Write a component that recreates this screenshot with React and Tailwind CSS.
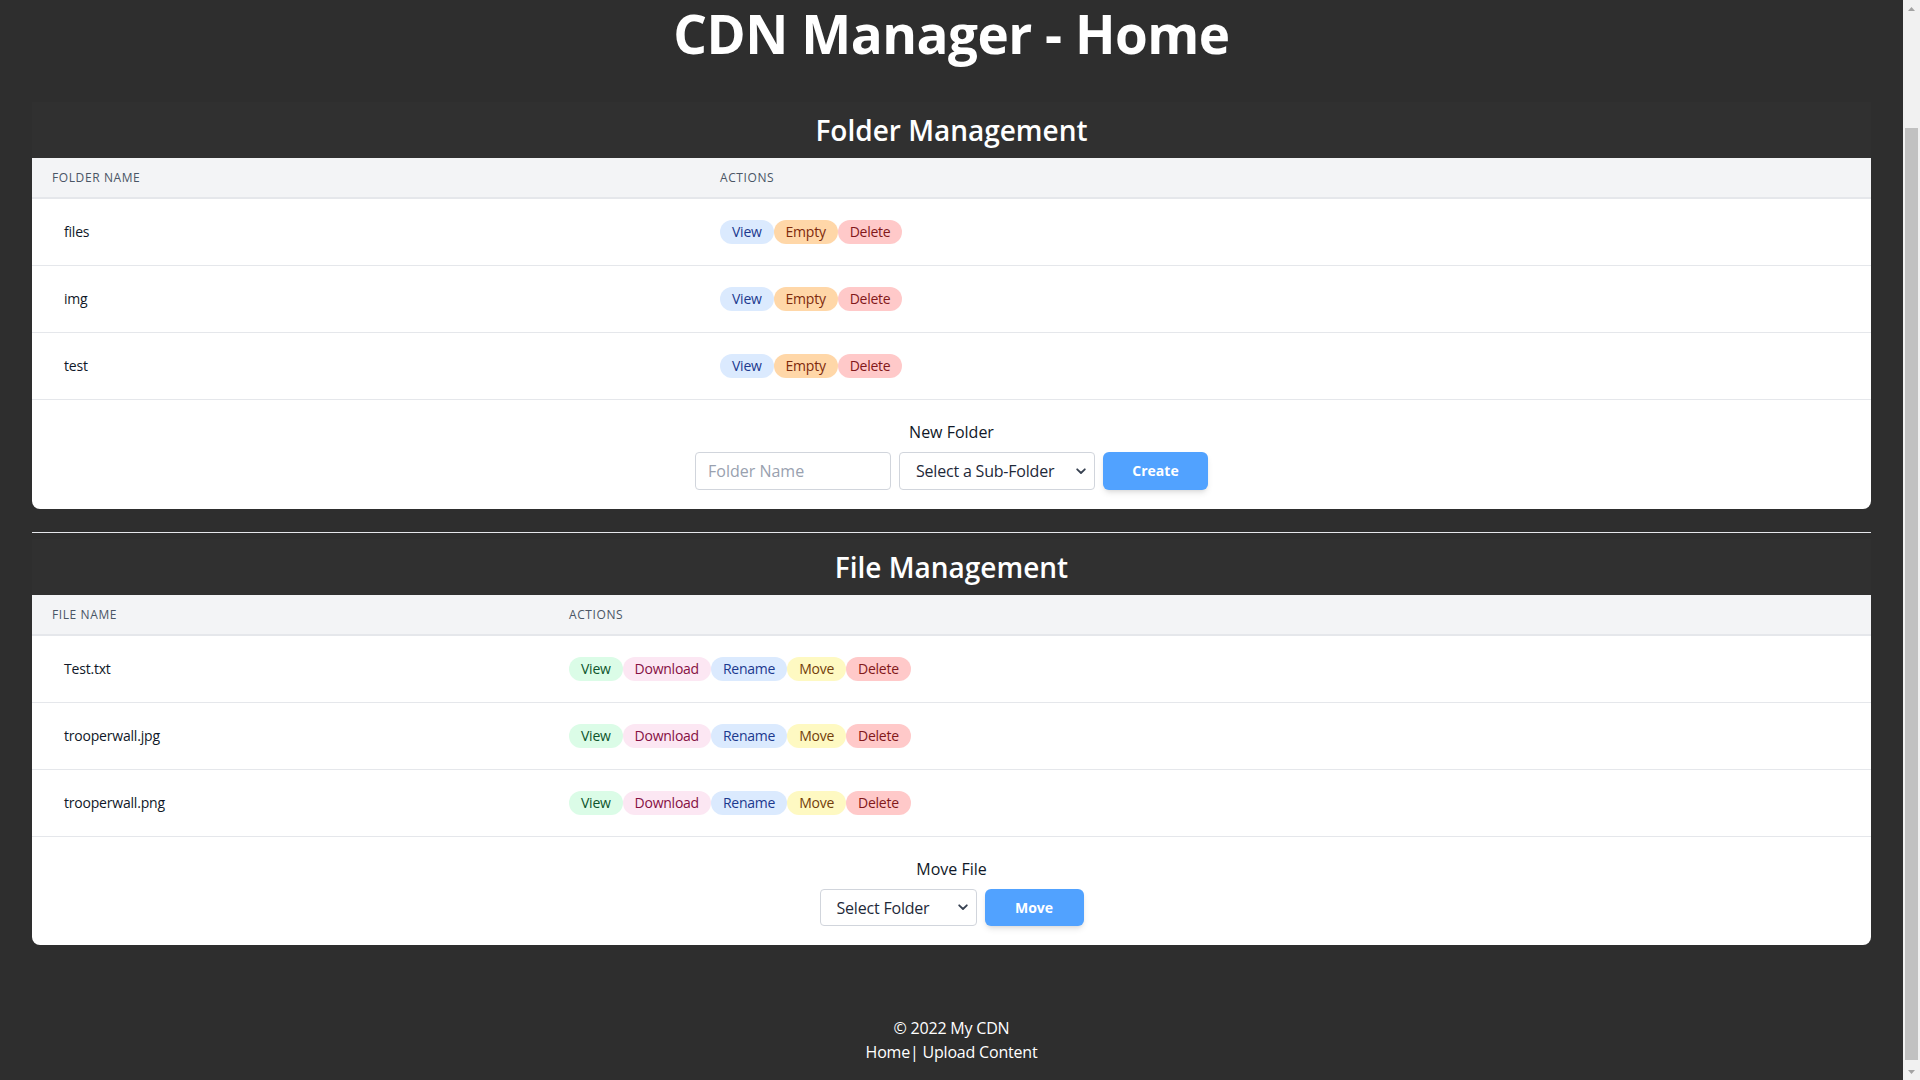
import React from "react";

const font = { fontFamily: '"Open Sans", "Noto Sans", sans-serif' };

function Pill({ cls, children }) {
  return (
    <button className={`h-6 px-3 rounded-full text-sm leading-6 tracking-[-0.25px] ${cls}`}>{children}</button>
  );
}

function Chevron() {
  return (
    <svg width="10" height="7" viewBox="0 0 10 7" className="shrink-0">
      <path d="M1.2 1.3 L5 5 L8.8 1.3" fill="none" stroke="#374151" strokeWidth="1.8" strokeLinecap="round" strokeLinejoin="round" />
    </svg>
  );
}

function FolderRow({ name }) {
  return (
    <div className="flex h-[67px] items-center border-b border-[#e5e7eb]">
      <div className="w-[668px] pl-8 text-sm text-gray-900 tracking-[-0.2px]">{name}</div>
      <div className="flex pl-5">
        <Pill cls="bg-blue-100 text-blue-900">View</Pill>
        <Pill cls="bg-orange-200 text-orange-900">Empty</Pill>
        <Pill cls="bg-red-200 text-red-900">Delete</Pill>
      </div>
    </div>
  );
}

function FileRow({ name }) {
  return (
    <div className="flex h-[67px] items-center border-b border-[#e5e7eb]">
      <div className="w-[517px] pl-8 text-sm text-gray-900 tracking-[-0.2px]">{name}</div>
      <div className="flex pl-5">
        <Pill cls="bg-green-100 text-green-900">View</Pill>
        <Pill cls="bg-pink-100 text-pink-900">Download</Pill>
        <Pill cls="bg-blue-100 text-blue-900">Rename</Pill>
        <Pill cls="bg-yellow-100 text-yellow-900">Move</Pill>
        <Pill cls="bg-red-200 text-red-900">Delete</Pill>
      </div>
    </div>
  );
}

export default function App() {
  return (
    <div className="h-screen w-full flex overflow-hidden bg-[#2e2e2e]" style={font}>
      <div className="flex-1 flex flex-col">
        <h1 className="text-center text-white font-bold text-[53px] leading-[68px] tracking-[-0.5px]">
          CDN Manager - Home
        </h1>

        <div className="mx-8 mt-[34px]">
          <h2 className="h-[56px] leading-[56px] text-center text-white font-semibold text-[28px] bg-[#303030]">
            Folder Management
          </h2>
          <div className="bg-white rounded-b-lg">
            <div className="flex h-[41px] items-center bg-gray-100 border-b-2 border-[#e5e7eb] text-xs font-medium text-gray-600 tracking-wider uppercase">
              <div className="w-[668px] pl-5 pt-px">Folder Name</div>
              <div className="pl-5 pt-px">Actions</div>
            </div>
            <FolderRow name="files" />
            <FolderRow name="img" />
            <FolderRow name="test" />
            <div className="flex flex-col items-center pt-[20px] pb-[19px]">
              <div className="text-base leading-6 text-gray-900">New Folder</div>
              <div className="mt-2 flex gap-2">
                <input
                  placeholder="Folder Name"
                  className="w-[196px] h-[38px] border border-gray-300 rounded px-3 text-base placeholder:text-gray-400 outline-none"
                />
                <div className="w-[196px] h-[38px] border border-gray-300 rounded pl-4 pr-2 flex items-center justify-between text-base text-gray-800 tracking-[-0.2px]">
                  <span>Select a Sub-Folder</span>
                  <Chevron />
                </div>
                <button className="w-[105px] h-[38px] rounded-md bg-blue-400 text-white text-sm font-bold shadow-md">
                  Create
                </button>
              </div>
            </div>
          </div>

          <div className="mt-[23px] h-px bg-gray-200" />

          <h2 className="mt-[6px] h-[56px] leading-[56px] text-center text-white font-semibold text-[28px] bg-[#303030]">
            File Management
          </h2>
          <div className="bg-white rounded-b-lg">
            <div className="flex h-[41px] items-center bg-gray-100 border-b-2 border-[#e5e7eb] text-xs font-medium text-gray-600 tracking-wider uppercase">
              <div className="w-[517px] pl-5 pt-px">File Name</div>
              <div className="pl-5 pt-px">Actions</div>
            </div>
            <FileRow name="Test.txt" />
            <FileRow name="trooperwall.jpg" />
            <FileRow name="trooperwall.png" />
            <div className="flex flex-col items-center pt-[20px] pb-[19px]">
              <div className="text-base leading-6 text-gray-900">Move File</div>
              <div className="mt-2 flex gap-2">
                <div className="w-[157px] h-[37px] border border-gray-300 rounded pl-4 pr-2 flex items-center justify-between text-base text-gray-800 tracking-[-0.2px]">
                  <span>Select Folder</span>
                  <Chevron />
                </div>
                <button className="w-[99px] h-[37px] rounded-md bg-blue-400 text-white text-sm font-bold shadow-md">
                  Move
                </button>
              </div>
            </div>
          </div>
        </div>

        <footer className="mt-[71px] text-center text-white text-base leading-6 tracking-[-0.2px]">
          <div>© 2022 My CDN</div>
          <div>
            <a>Home</a>| <a>Upload Content</a>
          </div>
        </footer>
      </div>

      <div className="w-[17px] h-full flex flex-col bg-[#f1f1f1]">
        <div className="h-[17px] flex items-center justify-center">
          <svg width="7" height="4" viewBox="0 0 7 4"><path d="M0 4 L3.5 0 L7 4 Z" fill="#a3a3a3" /></svg>
        </div>
        <div className="h-[111px]" />
        <div className="flex-1 mx-[2px] bg-[#c1c1c1]" />
        <div className="h-[3px]" />
        <div className="h-[17px] flex items-center justify-center">
          <svg width="7" height="4" viewBox="0 0 7 4"><path d="M0 0 L3.5 4 L7 0 Z" fill="#a3a3a3" /></svg>
        </div>
      </div>
    </div>
  );
}
